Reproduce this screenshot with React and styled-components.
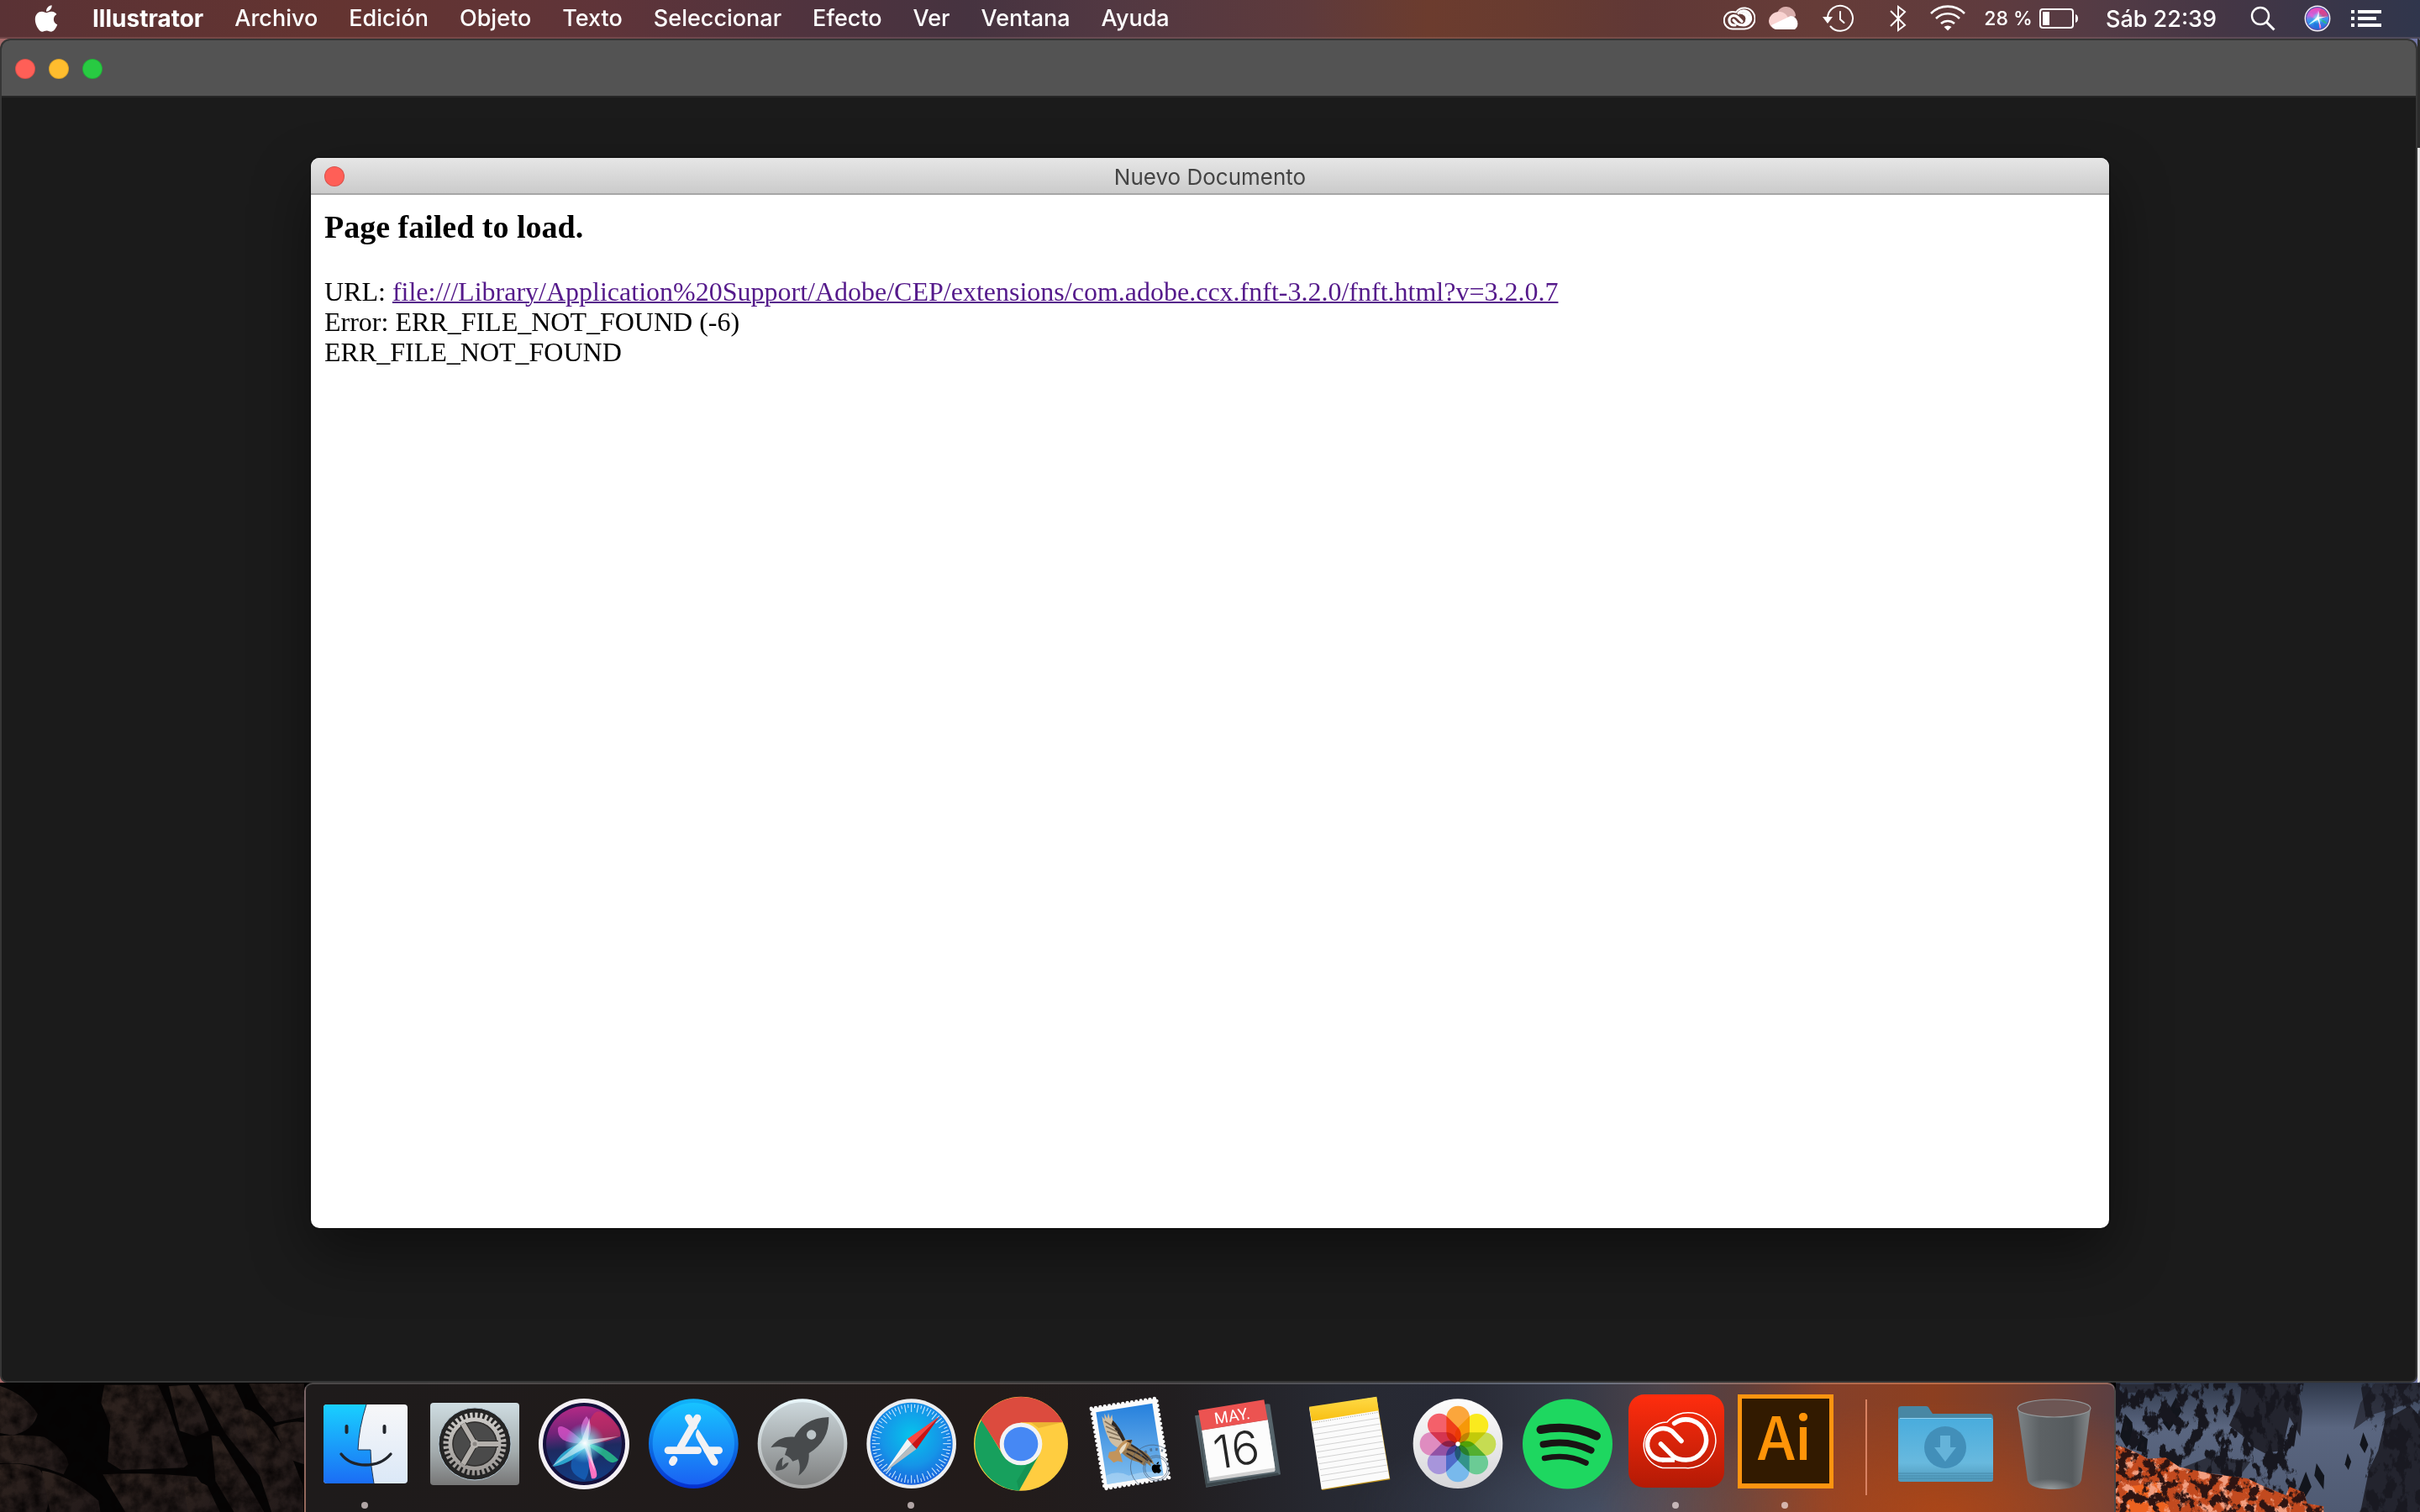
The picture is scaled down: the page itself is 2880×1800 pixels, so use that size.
import styled, { createGlobalStyle } from 'styled-components';
import { FaApple } from 'react-icons/fa';

const GlobalStyle = createGlobalStyle`
* {
  box-sizing: border-box;
}
body {
  margin: 0;
  background: #000;
  font-family: Inter, "Noto Sans", sans-serif;
}
button {
  border: none;
  padding: 0;
  background: none;
  color: inherit;
  font: inherit;
}
svg {
  display: block;
}
`;

const Desktop = styled.div`
min-height: 100vh;
display: flex;
flex-direction: column;
`;

/* menu bar */
const MenuBar = styled.header`
height: 46px;
flex: none;
display: flex;
justify-content: space-between;
padding: 0 46px 0 37px;
color: white;
border-bottom: 2px solid rgba(255, 200, 190, 0.14);
background: linear-gradient(90deg, #5a3235 0%, #643431 14%, #5f3439 25%, #50333e 33%, #463340 40%,
  #523842 46%, #5e3a3c 54%, #6c3c2e 59%, #683b30 63%, #603836 68%, #663c38 75%, #5f3b3e 82%,
  #533b45 87%, #443645 92%, #30364c 100%);
`;
const MenuList = styled.nav`
display: flex;
align-items: center;
gap: 37px;
`;
const MenuItem = styled.button`
height: 44px;
font-size: ${props => props.$bold ? 28 : 27}px;
line-height: 44px;
font-weight: ${props => props.$bold ? 700 : 500};
`;
const StatusList = styled.div`
display: flex;
align-items: center;
`;
const StatusItem = styled.button`
height: 44px;
display: flex;
align-items: center;
gap: 8px;
margin-left: ${props => props.$gap}px;
font-size: ${props => props.$small ? 23 : 27}px;
font-weight: 500;
white-space: nowrap;
`;

/* windows */
const Stage = styled.main`
flex: 1;
display: flex;
background: linear-gradient(90deg, #a86b6b, #7378a8);
`;
const AppWindow = styled.section`
flex: 1;
display: flex;
flex-direction: column;
border: 2px solid #363636;
border-radius: 12px 12px 8px 8px;
background: #1b1b1b;
overflow: hidden;
`;
const AppTitleBar = styled.div`
height: 68px;
flex: none;
display: flex;
align-items: center;
gap: 16px;
padding: 2px 16px 0;
background: #535353;
border-bottom: 2px solid #262626;
`;
const Light = styled.button`
width: 24px;
height: 24px;
border-radius: 50%;
background: ${props => props.$color};
border: 1px solid rgba(0, 0, 0, 0.15);
`;
const Workspace = styled.div`
flex: 1;
display: flex;
padding: 72px 365px 182px 368px;
`;
const BackWindow = styled.div`
width: 3px;
border-radius: 0 12px 10px 0;
background: linear-gradient(#2c2c2c 130px, #e4e4e4 130px);
`;
const Dialog = styled.section`
flex: 1;
display: flex;
flex-direction: column;
border-radius: 10px;
overflow: hidden;
background: white;
box-shadow: 0 0 2px black, 0 30px 70px rgba(0, 0, 0, 0.45);
`;
const DialogBar = styled.div`
height: 44px;
display: grid;
grid-template-columns: 24px 1fr 24px;
align-items: center;
padding: 2px 16px 0;
background: linear-gradient(#e6e6e6, #cbcbcb);
border-bottom: 2px solid #a6a6a6;
`;
const DialogTitle = styled.div`
text-align: center;
font-size: 26px;
color: #444;
`;
const DialogBody = styled.div`
padding: 16px;
color: black;
font-family: "Liberation Serif", serif;
font-size: 32px;
line-height: 36px;
`;
const Heading = styled.h3`
margin: 0 0 37px;
font-size: 38px;
line-height: 44px;
`;
const Line = styled.div`
`;
const Link = styled.a`
color: #551a8b;
text-decoration: underline;
text-decoration-thickness: 2px;
`;

/* dock */
const DockArea = styled.footer`
height: 154px;
flex: none;
display: grid;
grid-template-columns: 1fr auto 1fr;
background: black;
`;
const Scenery = styled.svg`
width: 100%;
height: 154px;
`;
const Dock = styled.div`
height: 154px;
display: flex;
padding: 0 5px;
border: 2px solid rgba(255, 255, 255, 0.2);
border-bottom: none;
border-radius: 10px 10px 0 0;
background:
  radial-gradient(420px 130px at 1955px 150px, rgba(190, 75, 20, 0.6), transparent),
  radial-gradient(300px 110px at 1540px 150px, rgba(75, 90, 115, 0.6), transparent),
  linear-gradient(90deg, #1e1b1b 0%, #221b1a 38%, #211e20 48%, #272932 57%, #282a35 64%, #353845 70%,
  #4c434a 75%, #5d3f3c 79%, #85402a 84%, #8c3f20 90%, #7c3f2c 94%, #5b3f42 100%);
`;
const DockItem = styled.button`
width: 130px;
height: 152px;
display: flex;
flex-direction: column;
align-items: center;
padding-top: 10px;
`;
const DockIcon = styled.svg`
width: 120px;
height: 120px;
overflow: visible;
`;
const Running = styled.span`
width: 8px;
height: 8px;
margin-top: 10px;
border-radius: 50%;
background: rgba(255, 240, 240, 0.65);
`;
const Divider = styled.div`
width: 2px;
height: 114px;
margin: 18px 29px 0 31px;
background: #d98262;
`;


/* status icons */
const CloudIcon = () => (
  <svg width="38" height="28" viewBox="0 0 38 28" fill="none" stroke="white">
    <path d="M11 26.500 A10 10 0 0 1 11 6 Q13 6 15 6.500 A12.500 12.500 0 1 1 25 26.500 Z" strokeWidth="2" />
    <g strokeWidth="3.200" strokeLinecap="round">
      <path d="M14 22 H12 A5.800 5.800 0 0 1 12 10.500 Q15 10.500 17 12.500 L22 17.500" />
      <path d="M12 16 L16 20 Q19 22 24 22 A8.500 8.500 0 1 0 18 7.500" />
    </g>
    <path d="M20 8 Q26 9 27 14 Q27 19 23 21 Q32 20 31 12 Q27 4 20 8Z" fill="white" />
  </svg>
);
const DriveIcon = () => (
  <svg width="40" height="28" viewBox="0 0 40 28">
    <path d="M9 12 A11.500 11.500 0 0 1 32 11 L20 18 Z" fill="#d9aeac" />
    <path d="M10 27 A10 10 0 0 1 3 10 A12 12 0 0 1 23 13 L10 27 Z" fill="#f9d3d1" />
    <path d="M3 22 L26 11 A9 9 0 0 1 31 27 H10 Q5 27 3 22 Z" fill="white" />
  </svg>
);
const TimeMachineIcon = () => (
  <svg width="38" height="34" viewBox="0 0 38 34">
    <g fill="none" stroke="white" strokeWidth="2" strokeLinecap="round">
      <path d="M6 16 A15 15 0 1 1 9.500 26.500" />
      <path d="M21 9 V18 L25.500 22" />
    </g>
    <path d="M0 15 H12 L6 23 Z" fill="white" />
  </svg>
);
const BluetoothIcon = () => (
  <svg width="20" height="34" viewBox="0 0 20 34" fill="none" stroke="white" strokeWidth="2">
    <path d="M1 8 L18 25 L10 31 V3 L18 9 L1 26" />
  </svg>
);
const WifiIcon = () => (
  <svg width="42" height="32" viewBox="0 0 42 32">
    <g fill="none" stroke="white" strokeWidth="2.600">
      <path d="M1 10 A28 28 0 0 1 41 10" />
      <path d="M7 16 A20 20 0 0 1 35 16" />
      <path d="M13 22 A12 12 0 0 1 29 22" />
    </g>
    <path d="M16.500 26 Q21 23 25.500 26 L21 30.500 Z" fill="white" />
  </svg>
);
const BatteryIcon = () => (
  <svg width="47" height="24" viewBox="0 0 47 24">
    <rect x="1" y="1" width="39" height="22" rx="3" fill="none" stroke="white" strokeWidth="2" />
    <rect x="4" y="4" width="8" height="16" fill="white" />
    <path d="M43 7 Q46 8 46 12 Q46 16 43 17 Z" fill="white" />
  </svg>
);
const SearchIcon = () => (
  <svg width="30" height="30" viewBox="0 0 30 30" fill="none" stroke="white" strokeWidth="2.400">
    <circle cx="12" cy="12" r="10" />
    <path d="M19 19 L28.500 28.500" strokeWidth="3" />
  </svg>
);
const SiriSmallIcon = () => (
  <svg width="32" height="32" viewBox="5 5 112 112">
    <SiriArt id="siriSmall" bright />
  </svg>
);
const ListIcon = () => (
  <svg width="36" height="20" viewBox="0 0 36 20" fill="white">
    <path d="M0 0 h4 v4 h-4z M0 8 h4 v4 h-4z M0 16 h4 v4 h-4z" />
    <path d="M8 0 h28 v4 h-28z M8 8 h22 v4 h-22z M8 16 h28 v4 h-28z" />
  </svg>
);

/* dock icons */
const FinderArt = () => (
  <>
    <defs>
      <linearGradient id="finderBlue" x1="0" y1="0" x2="0" y2="1">
        <stop offset="0" stopColor="#19d0ff" />
        <stop offset="1" stopColor="#1b6df5" />
      </linearGradient>
      <linearGradient id="finderWhite" x1="0" y1="0" x2="0" y2="1">
        <stop offset="0" stopColor="#f7f7f9" />
        <stop offset="1" stopColor="#dbe8f7" />
      </linearGradient>
    </defs>
    <rect x="11" y="14" width="100" height="94" rx="4" fill="url(#finderWhite)" />
    <path d="M15 14 H62 Q53 42 52 68 H67 Q67 88 71 108 H15 Q11 108 11 104 V18 Q11 14 15 14Z" fill="url(#finderBlue)" />
    <path d="M62 14 Q53 42 52 68 H67 Q67 88 71 108" fill="none" stroke="#1c3350" strokeWidth="1" />
    <g fill="none" stroke="#20242b" strokeWidth="4" strokeLinecap="round">
      <path d="M38.500 40 V47 M83.500 40 V47" />
      <path d="M32 73 Q42 86 61 86 Q80 86 91 73" strokeWidth="3.400" />
    </g>
  </>
);
const SettingsArt = () => (
  <>
    <defs>
      <linearGradient id="setBox" x1="0" y1="0" x2="0" y2="1">
        <stop offset="0" stopColor="#cfdde2" />
        <stop offset="0.6" stopColor="#a3abad" />
        <stop offset="1" stopColor="#777" />
      </linearGradient>
      <linearGradient id="setGear" gradientUnits="userSpaceOnUse" x1="0" y1="24" x2="0" y2="98">
        <stop offset="0" stopColor="#cfcdca" />
        <stop offset="1" stopColor="#9a9693" />
      </linearGradient>
    </defs>
    <rect x="8" y="12" width="106" height="98" rx="4" fill="url(#setBox)" />
    <circle cx="61" cy="61" r="43" fill="#242424" stroke="#b4c6d2" strokeWidth="1" />
    <circle cx="61" cy="61" r="27" fill="#4a4a4a" />
    <circle cx="61" cy="61" r="34" fill="none" stroke="url(#setGear)" strokeWidth="7" strokeDasharray="3.200 2.734" />
    <circle cx="61" cy="61" r="29" fill="none" stroke="url(#setGear)" strokeWidth="5" />
    <circle cx="61" cy="61" r="26" fill="none" stroke="#302e2d" strokeWidth="1.500" />
    <path d="M61 61 H89 M61 61 L47 37 M61 61 L47 85" stroke="#2c2b2a" strokeWidth="8" />
    <path d="M61 61 H89 M61 61 L47 37 M61 61 L47 85" stroke="#b3afab" strokeWidth="6" />
    <circle cx="61" cy="61" r="5" fill="#b9b5b1" />
    <circle cx="61" cy="61" r="2.500" fill="#8a8683" />
  </>
);
const SiriArt = ({ id, bright }) => (
  <>
    <defs>
      <radialGradient id={id}>
        <stop offset="0" stopColor="#ffffff" />
        <stop offset="0.3" stopColor="#8df2f7" stopOpacity="0.800" />
        <stop offset="1" stopColor="#55d8ff" stopOpacity="0" />
      </radialGradient>
      <linearGradient id={id + 'Bg'} x1="0.400" y1="0" x2="0.500" y2="1">
        <stop offset="0" stopColor={bright ? '#f247b4' : '#b52a86'} />
        <stop offset="0.330" stopColor={bright ? '#c065df' : '#722379'} />
        <stop offset="0.550" stopColor={bright ? '#3c9af0' : '#1e2a60'} />
        <stop offset="1" stopColor={bright ? '#2b60d8' : '#123b80'} />
      </linearGradient>
    </defs>
    <circle cx="61" cy="61" r="54" fill="#f4f0f4" />
    <circle cx="61" cy="61" r="49" fill={bright ? '#5a55b0' : '#15103c'} />
    <circle cx="61" cy="61" r="45" fill={`url(#${id}Bg)`} />
    <path d="M62 60 Q68 14 84 24 Q108 40 104 52 Q82 62 62 60Z" fill="#df3058" opacity="0.550" />
    <path d="M62 60 Q28 62 30 42 Q34 34 62 60Z" fill="#e75bd5" opacity="0.700" />
    <path d="M62 60 Q52 42 64 28 Q74 40 64 60Z" fill="#f58df0" opacity="0.600" />
    <path d="M60 60 Q34 66 24 88 Q50 84 64 62Z" fill="#31c9ec" opacity="0.750" />
    <path d="M62 60 Q84 62 102 80 Q94 88 84 76Z" fill="#28b78a" opacity="0.900" />
    <path d="M60 60 Q66 80 70 102 Q80 104 74 88 Q68 74 64 60Z" fill="#ff72c2" />
    <path d="M60 61 Q30 92 62 104 Q72 90 62 60Z" fill="#1676db" opacity="0.550" />
    <circle cx="62" cy="60" r="24" fill={`url(#${id})`} />
    <path d="M22 88 L58 57 L68 30 L66 56 L102 52 L68 62 L74 94 L62 66Z" fill="white" opacity={bright ? 0.9 : 0.5} />
  </>
);
const AppStoreArt = () => (
  <>
    <defs>
      <linearGradient id="storeBg" x1="0" y1="0" x2="0" y2="1">
        <stop offset="0" stopColor="#17c3ff" />
        <stop offset="1" stopColor="#1a62f3" />
      </linearGradient>
      <linearGradient id="storeRim" x1="0" y1="0" x2="0" y2="1">
        <stop offset="0" stopColor="#12b5fb" />
        <stop offset="1" stopColor="#0630d0" />
      </linearGradient>
    </defs>
    <circle cx="196" cy="236" r="160" fill="url(#storeRim)" />
    <circle cx="196" cy="236" r="146" fill="url(#storeBg)" />
    <g fill="none" stroke="#f2f2f4" strokeWidth="26" strokeLinecap="round">
      <path d="M178 144 L196 174" />
      <path d="M210 144 L150 248" />
      <path d="M105 260 H212 M246 260 H287" />
      <path d="M126 293 L121 302" />
    </g>
    <path d="M211 184 Q196 202 212 226 L258 307 Q268 319 279 312 Q287 304 281 293 L222 199 Q216 190 211 184Z" fill="#f2f2f4" />
  </>
);
const LaunchpadArt = () => (
  <>
    <defs>
      <linearGradient id="launchBg" x1="0" y1="0" x2="0" y2="1">
        <stop offset="0" stopColor="#ccd7db" />
        <stop offset="1" stopColor="#7f8080" />
      </linearGradient>
      <linearGradient id="launchRim" x1="0" y1="0" x2="0" y2="1">
        <stop offset="0" stopColor="#e9f7fb" />
        <stop offset="1" stopColor="#a7a7a7" />
      </linearGradient>
    </defs>
    <circle cx="585" cy="236" r="160" fill="url(#launchRim)" />
    <circle cx="585" cy="236" r="148" fill="url(#launchBg)" />
    <g fill="#474a4c">
      <path d="M679 141 C640 143 590 152 556 212 C520 208 490 222 472 250 C490 245 508 245 530 252 L522 276 Q540 282 550 299 L570 292 C578 314 576 334 571 350 C600 330 610 300 608 270 C656 242 680 200 679 141Z" />
      <path d="M517 285 C500 290 490 310 489 332 C510 333 530 325 536 304 Q524 302 513 318 Q510 300 517 285Z" />
    </g>
    <circle cx="617" cy="204" r="17" fill="#bcc5c8" />
  </>
);
const ticks = Array.from({ length: 72 }, (_, i) => i);
const SafariArt = () => (
  <>
    <defs>
      <radialGradient id="safariBg" cx="0.500" cy="0.400" r="0.600">
        <stop offset="0" stopColor="#06c4ec" />
        <stop offset="0.600" stopColor="#1595e8" />
        <stop offset="1" stopColor="#1a62dc" />
      </radialGradient>
    </defs>
    <circle cx="974" cy="236" r="160" fill="#eceef0" />
    <circle cx="974" cy="236" r="147" fill="url(#safariBg)" />
    <g stroke="#d5efff" strokeWidth="3">
      {ticks.map(i => (
        <path key={i} d={`M974 95 V${i % 2 ? 108 : 123}`} transform={`rotate(${i * 5} 974 236)`} />
      ))}
    </g>
    <path d="M878 338 L960 219 L976 238Z" fill="#f4f4f4" />
    <path d="M878 338 L992 255 L976 238Z" fill="#b9bcbf" />
    <path d="M1074 139 L960 219 L976 238Z" fill="#ff4640" />
    <path d="M1074 139 L992 255 L976 238Z" fill="#cc1212" />
  </>
);
const ChromeArt = () => (
  <>
    <circle cx="1365" cy="236" r="168" fill="#ffcd40" />
    <path d="M1225 150 L1299 274 L1365 312 L1431 274 L1358 404 A168 168 0 0 1 1225 150Z" fill="#17a05d" />
    <path d="M1222 150 A168 168 0 0 1 1515 160 H1365 L1290 256Z" fill="#dc4b3e" />
    <path d="M1400 160 H1513 L1428 180Z" fill="#d99d25" opacity="0.500" />
    <path d="M1431 274 L1358 404 L1350 370 L1390 304Z" fill="#0c7a42" opacity="0.350" />
    <circle cx="1365" cy="237" r="76" fill="#f3f3f3" />
    <circle cx="1365" cy="237" r="61" fill="#4688f4" />
  </>
);
const MailArt = () => (
  <>
    <defs>
      <linearGradient id="mailSky" x1="0" y1="0" x2="0" y2="1">
        <stop offset="0" stopColor="#2580dd" />
        <stop offset="1" stopColor="#84c0ee" />
      </linearGradient>
    </defs>
    <path d="M86 110 L318 74 L364 358 L134 397Z" fill="#fbfbfb" />
    <path d="M86 110 L318 74 L364 358 L134 397Z" fill="none" stroke="#fbfbfb" strokeWidth="13" strokeDasharray="0 16.300" strokeLinecap="round" />
    <path d="M103 124 L304 92 L344 349 L143 381Z" fill="url(#mailSky)" />
    <path d="M143 381 L139 350 Q180 330 220 350 Q280 330 342 340 L344 349Z" fill="#b8dbf5" opacity="0.550" />
    {/* hawk */}
    <path d="M124 138 L134 150 L133 128 L143 146 L147 126 L153 148 L160 132 L163 152 Q180 170 190 188 Q200 204 208 222 L186 252 Q158 244 146 214 Q130 178 124 138Z" fill="#d0bea2" />
    <path d="M163 152 Q188 176 208 222 L198 228 Q178 192 158 168Z" fill="#2e2825" />
    <path d="M134 156 L172 180 M138 174 L180 194 M142 192 L186 208 M150 212 L190 222" stroke="#85735c" strokeWidth="5" />
    <path d="M206 226 Q222 216 233 226 L228 238 Q244 252 270 262 Q296 274 312 312 L296 302 L300 318 L282 304 L276 316 L256 302 Q222 296 196 270 L186 250Z" fill="#94774f" />
    <path d="M214 256 Q250 264 288 296 M212 270 Q240 286 268 302 M228 240 Q268 262 302 302" stroke="#332c29" strokeWidth="6" fill="none" />
    <path d="M210 222 L232 222 L224 234 Q210 262 190 272 L198 302 L180 298 L166 304 L146 284 L150 266 L172 262 Q186 236 210 222Z" fill="#c2945c" />
    <path d="M210 226 L232 222 L226 234Z" fill="#3b2a22" />
    <path d="M186 262 Q196 240 214 232 Q206 262 190 274Z" fill="#eaddc5" />
    {/* postmark */}
    <g fill="none" stroke="#49607b" strokeWidth="3" opacity="0.700">
      <path d="M258 382 A78 78 0 1 1 352 256" />
      <circle cx="318" cy="324" r="46" />
      <circle cx="318" cy="324" r="40" />
      <path d="M262 280 A70 70 0 0 1 342 262" strokeWidth="10" strokeDasharray="8 12" />
    </g>
    <g transform="translate(296 298) scale(0.100)" fill="#3c5a7c">
      <FaApple size={460} />
    </g>
  </>
);
const CalendarArt = () => (
  <>
    <path d="M456 136 L716 94 L724 95 L762 346 L496 392Z" fill="#56646b" />
    <path d="M466 140 L500 378 L752 340 L758 348 L496 390Z" fill="#3b464b" />
    <path d="M481 188 L716 151 L743 330 L740 336 L509 370Z" fill="#d2d2d2" />
    <path d="M481 188 L716 151 L742 322 L507 358Z" fill="#fcfcfc" />
    <path d="M468 117 L703 79 L716 151 L481 188Z" fill="#ec5351" />
    <g transform="rotate(-9 600 230)" fontFamily="Roboto, sans-serif" textAnchor="middle">
      <text x="604" y="156" fontSize="57" fill="white">MAY.</text>
      <text x="600" y="316" fontSize="164" fontWeight="300" fontFamily="Inter, sans-serif" fill="#262626">16</text>
    </g>
  </>
);
const noteLines = [186, 207, 228, 249, 270, 291, 312, 333, 354, 375];
const NotesArt = () => (
  <>
    <defs>
      <linearGradient id="noteTop" x1="0" y1="0" x2="0" y2="1">
        <stop offset="0" stopColor="#ffda47" />
        <stop offset="1" stopColor="#f8bf12" />
      </linearGradient>
    </defs>
    <path d="M866 112 L1105 72 L1153 364 L910 402Z" fill="#c2951b" />
    <path d="M864 108 L1103 70 L1151 360 L908 399Z" fill="#fbfbfb" />
    <path d="M864 104 L1105 68 L1112 118 L873 156Z" fill="url(#noteTop)" />
    <path d="M876 162 L1111 124" stroke="#9a9a9a" strokeWidth="3" strokeDasharray="3 5" />
    <g stroke="#bdbdbd" strokeWidth="2">
      {noteLines.map(y => (
        <path key={y} d={`M${876 + (y - 176) * 0.163} ${y - 4} l238 -38`} />
      ))}
    </g>
  </>
);
const petals = ['#fba63c', '#faea1e', '#c6dc52', '#6bcb95', '#78b9ec', '#a795db', '#df8cc0', '#f4606a'];
const Petal = styled.rect`
mix-blend-mode: multiply;
`;
const PetalGroup = styled.g`
isolation: isolate;
`;
const PhotosArt = () => (
  <>
    <defs>
      <linearGradient id="photosBg" x1="0" y1="0" x2="0" y2="1">
        <stop offset="0" stopColor="#fdfdfd" />
        <stop offset="1" stopColor="#d6d6d9" />
      </linearGradient>
    </defs>
    <circle cx="1395" cy="236" r="160" fill="url(#photosBg)" />
    <PetalGroup>
      {petals.map((color, i) => (
        <Petal key={color} x="1354" y="101" width="83" height="134" rx="41" fill={color}
          transform={`rotate(${i * 45} 1395 237)`} />
      ))}
    </PetalGroup>
    <circle cx="1395" cy="237" r="8" fill="white" />
  </>
);
const SpotifyArt = () => (
  <>
    <circle cx="61.500" cy="61" r="53.500" fill="#1ed760" />
    <g fill="none" stroke="#191414" strokeLinecap="round">
      <path d="M29.500 44 Q65 37 96 51.500" strokeWidth="10" />
      <path d="M32.500 61.500 Q63 55 89.500 68.500" strokeWidth="8" />
      <path d="M34 78 Q61 72 83.500 83.500" strokeWidth="6.500" />
    </g>
  </>
);
const CreativeCloudArt = () => (
  <>
    <defs>
      <linearGradient id="ccBg" x1="0" y1="0" x2="0" y2="1">
        <stop offset="0" stopColor="#ff2d0e" />
        <stop offset="1" stopColor="#b31a05" />
      </linearGradient>
    </defs>
    <rect x="4" y="2" width="114" height="111" rx="19" fill="url(#ccBg)" />
    <g fill="none" stroke="white">
      <path d="M44.500 89.500 A27.500 27.500 0 0 1 50 35 A33 33 0 1 1 71.800 89.500Z" strokeWidth="1.500" />
      <g strokeWidth="5.500" strokeLinecap="round">
        <path d="M44.800 80 A18.700 18.700 0 1 1 56 46 L67 57.500" />
        <path d="M42.500 61 L57 75.500 Q63 80 72.500 80 A24 24 0 1 0 58.500 36.500" />
      </g>
      <path d="M44 80 H59" strokeWidth="5.500" />
    </g>
  </>
);
const IllustratorArt = () => (
  <>
    <rect x="4" y="2" width="114" height="112" fill="#ff9410" />
    <rect x="9" y="7" width="104" height="101" fill="#321a00" />
    <text x="60" y="80" fontSize="71" fontWeight="500" textAnchor="middle" fontFamily="'Noto Sans CJK SC', sans-serif" fill="#ff9408">Ai</text>
  </>
);
const DownloadsArt = () => (
  <>
    <defs>
      <linearGradient id="folder" x1="0" y1="0" x2="0" y2="1">
        <stop offset="0" stopColor="#49acdd" />
        <stop offset="0.700" stopColor="#68b9de" />
        <stop offset="1" stopColor="#5099bb" />
      </linearGradient>
    </defs>
    <path d="M3 34 V19 Q3 16 7 16 H36 Q39 16 40 19 L44 25 H112 Q116 25 116 30 V40Z" fill="#4887a4" />
    <rect x="3" y="30" width="113" height="76" rx="3" fill="url(#folder)" />
    <path d="M5 30.500 H114" stroke="#91d0ee" strokeWidth="1" />
    <path d="M3 96 H116 M3 99 H116 M3 102 H116" stroke="#4789a8" strokeWidth="1" />
    <circle cx="59" cy="65" r="25" fill="#428fb9" />
    <path d="M53 51 H65 V65 H72 L59 82 L46 65 H53Z" fill="#65b3d9" />
  </>
);
const TrashArt = () => (
  <>
    <defs>
      <linearGradient id="bin" x1="0" y1="0" x2="1" y2="0">
        <stop offset="0" stopColor="#7d8386" />
        <stop offset="0.300" stopColor="#5d6265" />
        <stop offset="0.750" stopColor="#565b5e" />
        <stop offset="1" stopColor="#85898b" />
      </linearGradient>
      <radialGradient id="binGlow" cx="0.400" cy="1" r="0.500">
        <stop offset="0" stopColor="#aab0b2" stopOpacity="0.800" />
        <stop offset="1" stopColor="#aab0b2" stopOpacity="0" />
      </radialGradient>
    </defs>
    <path d="M15 18 L27 104 Q30 115 59 115 Q88 115 91 104 L102 18Z" fill="url(#bin)" />
    <path d="M26 90 L27 104 Q30 115 59 115 Q88 115 91 104 L93 90Z" fill="url(#binGlow)" />
    <ellipse cx="58.500" cy="18.500" rx="43.500" ry="10.500" fill="#6d5654" stroke="#92989a" strokeWidth="1.200" />
  </>
);

/* wallpaper that shows on both sides of the dock */
const Rocks = () => (
  <Scenery viewBox="0 48 728 462" preserveAspectRatio="none">
    <defs>
      <linearGradient id="rock" x1="0" y1="0" x2="1" y2="1">
        <stop offset="0" stopColor="#30241f" />
        <stop offset="1" stopColor="#221a1a" />
      </linearGradient>
      <filter id="grain" x="0" y="0" width="1" height="1" colorInterpolationFilters="sRGB">
        <feTurbulence type="fractalNoise" baseFrequency="0.030 0.020" numOctaves="5" seed="4" />
        <feColorMatrix values="0 0 0 0 0.020  0 0 0 0 0.010  0 0 0 0 0.010  1.600 0 0 0 -0.500" />
      </filter>
    </defs>
    <rect y="48" width="728" height="462" fill="#050404" />
    <g fill="url(#rock)">
      <path d="M0 60 Q60 90 90 160 Q80 220 30 236 L0 228Z" />
      <path d="M0 238 Q60 232 106 242 Q160 290 164 340 L152 376 Q80 330 0 336Z" />
      <path d="M0 340 Q60 330 96 360 L126 430 L110 510 H0Z" />
      <path d="M100 362 Q170 380 236 470 L240 510 H120Z" />
      <path d="M250 56 H378 L400 130 L450 340 L440 352 L290 360 L258 330 L264 200 L242 120Z" />
      <path d="M246 376 Q350 366 470 384 L500 440 L520 510 H300Z" />
      <path d="M404 60 L452 56 Q480 120 500 220 L470 240 L430 220Z" />
      <path d="M440 420 Q470 390 496 416 L526 510 H450Z" />
      <path d="M506 236 L524 240 L590 400 L632 510 H560 L516 400Z" />
      <path d="M474 56 L560 54 L596 170 L630 300 L626 390 L540 230Z" />
      <path d="M574 140 Q610 140 640 200 L700 320 L726 420 V510 H650 L604 300Z" />
      <path d="M596 52 H728 V170 L660 190 L620 120Z" />
      <path d="M654 206 Q700 180 728 190 V340 L690 320Z" />
    </g>
    <rect y="48" width="728" height="462" filter="url(#grain)" />
  </Scenery>
);
const emberHill = 'M710 270 Q760 290 800 320 L850 316 L890 350 L990 376 L1080 390 L1130 420 L1190 450 L1200 420 L1240 440 L1250 480 L1296 490 V510 H710Z';
const Mountain = () => (
  <Scenery viewBox="710 48 858 462" preserveAspectRatio="none">
    <defs>
      <linearGradient id="snow" x1="0" y1="0" x2="0" y2="1">
        <stop offset="0" stopColor="#30394b" />
        <stop offset="0.350" stopColor="#5a6680" />
        <stop offset="1" stopColor="#4f5a72" />
      </linearGradient>
      <filter id="trees" x="0" y="0" width="1" height="1" colorInterpolationFilters="sRGB">
        <feTurbulence type="fractalNoise" baseFrequency="0.030 0.014" numOctaves="5" seed="11" />
        <feColorMatrix values="0 0 0 0 0.090  0 0 0 0 0.090  0 0 0 0 0.120  12 0 0 0 -5.900" />
        <feComposite in2="SourceGraphic" operator="in" />
      </filter>
      <filter id="embers" x="0" y="0" width="1" height="1" colorInterpolationFilters="sRGB">
        <feTurbulence type="fractalNoise" baseFrequency="0.035 0.025" numOctaves="5" seed="7" />
        <feColorMatrix values="0 0 0 0 0.180  0 0 0 0 0.080  0 0 0 0 0.070  10 0 0 0 -4.900" />
        <feComposite in2="SourceGraphic" operator="in" />
      </filter>
      <filter id="sparks" x="0" y="0" width="1" height="1" colorInterpolationFilters="sRGB">
        <feTurbulence type="fractalNoise" baseFrequency="0.035 0.025" numOctaves="5" seed="23" />
        <feColorMatrix values="0 0 0 0 0.950  0 0 0 0 0.620  0 0 0 0 0.500  8 0 0 0 -4.100" />
        <feComposite in2="SourceGraphic" operator="in" />
      </filter>
    </defs>
    <rect x="710" y="48" width="858" height="462" fill="url(#snow)" />
    <g fill="#23242e">
      <path d="M1066 50 H1220 L1236 150 L1230 240 L1200 170 L1180 290 L1130 300 L1100 280 L1070 240 L1030 200 L1060 120Z" />
      <path d="M1540 130 L1568 170 V510 H1400 L1424 360 L1450 290 L1470 180Z" />
      <path d="M1440 50 H1568 V110 L1440 160 L1380 216 L1400 120Z" opacity="0.700" />
      <path d="M900 350 L980 310 L1090 330 L1060 380 L950 370Z" opacity="0.800" />
      <path d="M720 54 H900 L860 80 L740 84Z" opacity="0.700" />
    </g>
    <g fill="#12151c">
      <path d="M736 160 L756 190 L762 250 L740 280 L722 240Z" />
      <path d="M880 100 L896 150 L860 220 L842 190Z" />
      <path d="M778 230 L800 250 L796 300 L768 290Z" />
      <path d="M1364 300 L1374 330 L1366 360 L1356 340Z" />
      <path d="M1276 336 L1298 380 L1296 430 L1270 380Z" />
      <path d="M1246 366 L1262 420 L1244 458 L1226 430Z" />
      <path d="M1408 226 L1422 270 L1412 300 L1398 270Z" />
    </g>
    <path d="M710 50 H1240 L1210 300 L1240 510 H710Z" filter="url(#trees)" />
    <path d="M1400 50 H1568 V510 H1390 L1430 300Z" filter="url(#trees)" opacity="0.800" />
    <path d={emberHill} fill="#c24a1f" />
    <path d="M740 420 L850 400 L860 510 H730Z" fill="#ec6220" />
    <path d={emberHill} filter="url(#sparks)" />
    <path d={emberHill} filter="url(#embers)" />
  </Scenery>
);


const menus = ['Archivo', 'Edición', 'Objeto', 'Texto', 'Seleccionar', 'Efecto', 'Ver', 'Ventana', 'Ayuda'];

const apps = [
  { name: 'Finder', box: '0 0 120 120', Art: FinderArt, running: true },
  { name: 'Preferencias del Sistema', box: '0 0 120 120', Art: SettingsArt },
  { name: 'Siri', box: '0 0 120 120', Art: () => <SiriArt id="siriDock" /> },
  { name: 'App Store', box: '12 54 360 360', Art: AppStoreArt },
  { name: 'Launchpad', box: '402 54 360 360', Art: LaunchpadArt },
  { name: 'Safari', box: '792 54 360 360', Art: SafariArt, running: true },
  { name: 'Chrome', box: '1182 54 360 360', Art: ChromeArt },
  { name: 'Mail', box: '42 54 360 360', Art: MailArt },
  { name: 'Calendario', box: '432 54 360 360', Art: CalendarArt },
  { name: 'Notas', box: '822 54 360 360', Art: NotesArt },
  { name: 'Fotos', box: '1212 54 360 360', Art: PhotosArt },
  { name: 'Spotify', box: '0 0 120 120', Art: SpotifyArt },
  { name: 'Creative Cloud', box: '0 0 120 120', Art: CreativeCloudArt, running: true },
  { name: 'Illustrator', box: '0 0 120 120', Art: IllustratorArt, running: true },
];
const places = [
  { name: 'Descargas', box: '0 0 120 120', Art: DownloadsArt },
  { name: 'Papelera', box: '0 0 120 120', Art: TrashArt },
];

const DockEntry = ({ name, box, Art, running }) => (
  <DockItem aria-label={name}>
    <DockIcon viewBox={box}><Art /></DockIcon>
    {running && <Running />}
  </DockItem>
);

const App = () => {
  return (
    <Desktop>
      <GlobalStyle />
      <MenuBar>
        <MenuList>
          <MenuItem aria-label="Apple"><FaApple size={36} /></MenuItem>
          <MenuItem $bold>Illustrator</MenuItem>
          {menus.map(item => <MenuItem key={item}>{item}</MenuItem>)}
        </MenuList>
        <StatusList>
          <StatusItem aria-label="Creative Cloud" $gap={0}><CloudIcon /></StatusItem>
          <StatusItem aria-label="Nube" $gap={16}><DriveIcon /></StatusItem>
          <StatusItem aria-label="Time Machine" $gap={24}><TimeMachineIcon /></StatusItem>
          <StatusItem aria-label="Bluetooth" $gap={42}><BluetoothIcon /></StatusItem>
          <StatusItem aria-label="Wi-Fi" $gap={28}><WifiIcon /></StatusItem>
          <StatusItem $small $gap={22}>28 % <BatteryIcon /></StatusItem>
          <StatusItem $gap={32}>Sáb 22:39</StatusItem>
          <StatusItem aria-label="Buscar" $gap={40}><SearchIcon /></StatusItem>
          <StatusItem aria-label="Siri" $gap={34}><SiriSmallIcon /></StatusItem>
          <StatusItem aria-label="Notificaciones" $gap={24}><ListIcon /></StatusItem>
        </StatusList>
      </MenuBar>
      <Stage>
        <AppWindow>
          <AppTitleBar>
            <Light aria-label="Cerrar" $color="#ff5f57" />
            <Light aria-label="Minimizar" $color="#ffbd2e" />
            <Light aria-label="Ampliar" $color="#28ca42" />
          </AppTitleBar>
          <Workspace>
            <Dialog>
              <DialogBar>
                <Light aria-label="Cerrar documento" $color="#ff5f57" />
                <DialogTitle>Nuevo Documento</DialogTitle>
              </DialogBar>
              <DialogBody>
                <Heading>Page failed to load.</Heading>
                <Line>
                  URL: <Link href="#">file:///Library/Application%20Support/Adobe/CEP/extensions/com.adobe.ccx.fnft-3.2.0/fnft.html?v=3.2.0.7</Link>
                </Line>
                <Line>Error: ERR_FILE_NOT_FOUND (-6)</Line>
                <Line>ERR_FILE_NOT_FOUND</Line>
              </DialogBody>
            </Dialog>
          </Workspace>
        </AppWindow>
        <BackWindow />
      </Stage>
      <DockArea>
        <Rocks />
        <Dock>
          {apps.map(app => <DockEntry key={app.name} {...app} />)}
          <Divider />
          {places.map(place => <DockEntry key={place.name} {...place} />)}
        </Dock>
        <Mountain />
      </DockArea>
    </Desktop>
  )
}

export default App
